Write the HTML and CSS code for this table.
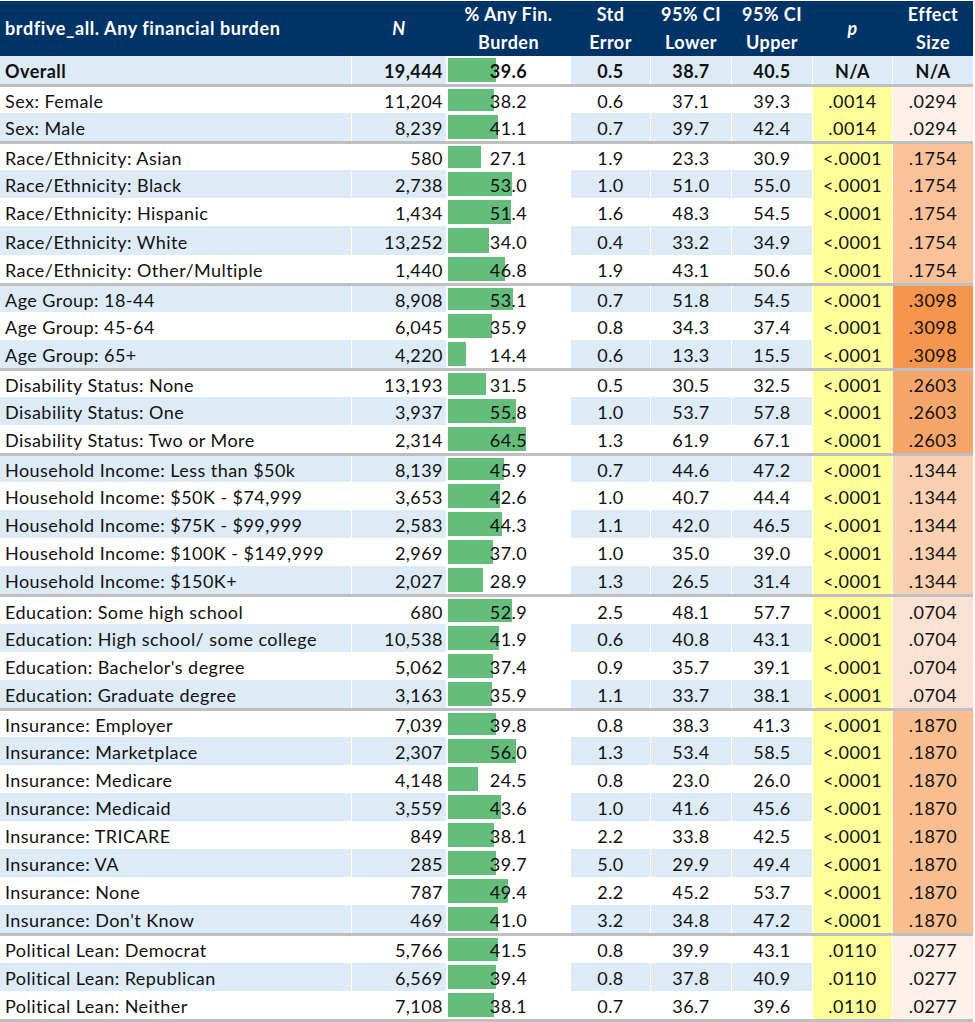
FILE: index.html
```html
<!DOCTYPE html>
<html>
<head>
<meta charset="utf-8">
<link rel="stylesheet" href="styles.css">
</head>
<body>
<div class="table">
  <div class="head">
    <div class="hc hl">brdfive_all. Any financial burden</div>
    <div class="hc"><i>N</i></div>
    <div class="hc">% Any Fin.<br>Burden</div>
    <div class="hc">Std<br>Error</div>
    <div class="hc">95% CI<br>Lower</div>
    <div class="hc">95% CI<br>Upper</div>
    <div class="hc"><i>p</i></div>
    <div class="hc">Effect<br>Size</div>
  </div>
  <div class="body">
    <div class="row overall"><div class="c lab">Overall</div><div class="c n">19,444</div><div class="c bar"><span class="fill" style="width:48.1px"></span><span class="v">39.6</span></div><div class="c">0.5</div><div class="c">38.7</div><div class="c">40.5</div><div class="c p">N/A</div><div class="c e">N/A</div></div>

    <div class="row gs"><div class="c lab">Sex: Female</div><div class="c n">11,204</div><div class="c bar"><span class="fill" style="width:46.4px"></span><span class="v">38.2</span></div><div class="c">0.6</div><div class="c">37.1</div><div class="c">39.3</div><div class="c p">.0014</div><div class="c e" style="background:#FCF0E9">.0294</div></div>
    <div class="row"><div class="c lab">Sex: Male</div><div class="c n">8,239</div><div class="c bar"><span class="fill" style="width:49.9px"></span><span class="v">41.1</span></div><div class="c">0.7</div><div class="c">39.7</div><div class="c">42.4</div><div class="c p">.0014</div><div class="c e" style="background:#FCF0E9">.0294</div></div>

    <div class="row gs"><div class="c lab">Race/Ethnicity: Asian</div><div class="c n">580</div><div class="c bar"><span class="fill" style="width:32.9px"></span><span class="v">27.1</span></div><div class="c">1.9</div><div class="c">23.3</div><div class="c">30.9</div><div class="c p">&lt;.0001</div><div class="c e" style="background:#F9C299">.1754</div></div>
    <div class="row"><div class="c lab">Race/Ethnicity: Black</div><div class="c n">2,738</div><div class="c bar"><span class="fill" style="width:64.4px"></span><span class="v">53.0</span></div><div class="c">1.0</div><div class="c">51.0</div><div class="c">55.0</div><div class="c p">&lt;.0001</div><div class="c e" style="background:#F9C299">.1754</div></div>
    <div class="row"><div class="c lab">Race/Ethnicity: Hispanic</div><div class="c n">1,434</div><div class="c bar"><span class="fill" style="width:62.5px"></span><span class="v">51.4</span></div><div class="c">1.6</div><div class="c">48.3</div><div class="c">54.5</div><div class="c p">&lt;.0001</div><div class="c e" style="background:#F9C299">.1754</div></div>
    <div class="row"><div class="c lab">Race/Ethnicity: White</div><div class="c n">13,252</div><div class="c bar"><span class="fill" style="width:41.3px"></span><span class="v">34.0</span></div><div class="c">0.4</div><div class="c">33.2</div><div class="c">34.9</div><div class="c p">&lt;.0001</div><div class="c e" style="background:#F9C299">.1754</div></div>
    <div class="row"><div class="c lab">Race/Ethnicity: Other/Multiple</div><div class="c n">1,440</div><div class="c bar"><span class="fill" style="width:56.9px"></span><span class="v">46.8</span></div><div class="c">1.9</div><div class="c">43.1</div><div class="c">50.6</div><div class="c p">&lt;.0001</div><div class="c e" style="background:#F9C299">.1754</div></div>

    <div class="row gs"><div class="c lab">Age Group: 18-44</div><div class="c n">8,908</div><div class="c bar"><span class="fill" style="width:64.5px"></span><span class="v">53.1</span></div><div class="c">0.7</div><div class="c">51.8</div><div class="c">54.5</div><div class="c p">&lt;.0001</div><div class="c e" style="background:#F5964C">.3098</div></div>
    <div class="row"><div class="c lab">Age Group: 45-64</div><div class="c n">6,045</div><div class="c bar"><span class="fill" style="width:43.6px"></span><span class="v">35.9</span></div><div class="c">0.8</div><div class="c">34.3</div><div class="c">37.4</div><div class="c p">&lt;.0001</div><div class="c e" style="background:#F5964C">.3098</div></div>
    <div class="row"><div class="c lab">Age Group: 65+</div><div class="c n">4,220</div><div class="c bar"><span class="fill" style="width:17.5px"></span><span class="v">14.4</span></div><div class="c">0.6</div><div class="c">13.3</div><div class="c">15.5</div><div class="c p">&lt;.0001</div><div class="c e" style="background:#F5964C">.3098</div></div>

    <div class="row gs"><div class="c lab">Disability Status: None</div><div class="c n">13,193</div><div class="c bar"><span class="fill" style="width:38.3px"></span><span class="v">31.5</span></div><div class="c">0.5</div><div class="c">30.5</div><div class="c">32.5</div><div class="c p">&lt;.0001</div><div class="c e" style="background:#F6A66B">.2603</div></div>
    <div class="row"><div class="c lab">Disability Status: One</div><div class="c n">3,937</div><div class="c bar"><span class="fill" style="width:67.8px"></span><span class="v">55.8</span></div><div class="c">1.0</div><div class="c">53.7</div><div class="c">57.8</div><div class="c p">&lt;.0001</div><div class="c e" style="background:#F6A66B">.2603</div></div>
    <div class="row"><div class="c lab">Disability Status: Two or More</div><div class="c n">2,314</div><div class="c bar"><span class="fill" style="width:78.4px"></span><span class="v">64.5</span></div><div class="c">1.3</div><div class="c">61.9</div><div class="c">67.1</div><div class="c p">&lt;.0001</div><div class="c e" style="background:#F6A66B">.2603</div></div>

    <div class="row gs"><div class="c lab">Household Income: Less than $50k</div><div class="c n">8,139</div><div class="c bar"><span class="fill" style="width:55.8px"></span><span class="v">45.9</span></div><div class="c">0.7</div><div class="c">44.6</div><div class="c">47.2</div><div class="c p">&lt;.0001</div><div class="c e" style="background:#FAD0B0">.1344</div></div>
    <div class="row"><div class="c lab">Household Income: $50K - $74,999</div><div class="c n">3,653</div><div class="c bar"><span class="fill" style="width:51.8px"></span><span class="v">42.6</span></div><div class="c">1.0</div><div class="c">40.7</div><div class="c">44.4</div><div class="c p">&lt;.0001</div><div class="c e" style="background:#FAD0B0">.1344</div></div>
    <div class="row"><div class="c lab">Household Income: $75K - $99,999</div><div class="c n">2,583</div><div class="c bar"><span class="fill" style="width:53.8px"></span><span class="v">44.3</span></div><div class="c">1.1</div><div class="c">42.0</div><div class="c">46.5</div><div class="c p">&lt;.0001</div><div class="c e" style="background:#FAD0B0">.1344</div></div>
    <div class="row"><div class="c lab">Household Income: $100K - $149,999</div><div class="c n">2,969</div><div class="c bar"><span class="fill" style="width:45.0px"></span><span class="v">37.0</span></div><div class="c">1.0</div><div class="c">35.0</div><div class="c">39.0</div><div class="c p">&lt;.0001</div><div class="c e" style="background:#FAD0B0">.1344</div></div>
    <div class="row"><div class="c lab">Household Income: $150K+</div><div class="c n">2,027</div><div class="c bar"><span class="fill" style="width:35.1px"></span><span class="v">28.9</span></div><div class="c">1.3</div><div class="c">26.5</div><div class="c">31.4</div><div class="c p">&lt;.0001</div><div class="c e" style="background:#FAD0B0">.1344</div></div>

    <div class="row gs"><div class="c lab">Education: Some high school</div><div class="c n">680</div><div class="c bar"><span class="fill" style="width:64.3px"></span><span class="v">52.9</span></div><div class="c">2.5</div><div class="c">48.1</div><div class="c">57.7</div><div class="c p">&lt;.0001</div><div class="c e" style="background:#FBE3D4">.0704</div></div>
    <div class="row"><div class="c lab">Education: High school/ some college</div><div class="c n">10,538</div><div class="c bar"><span class="fill" style="width:50.9px"></span><span class="v">41.9</span></div><div class="c">0.6</div><div class="c">40.8</div><div class="c">43.1</div><div class="c p">&lt;.0001</div><div class="c e" style="background:#FBE3D4">.0704</div></div>
    <div class="row"><div class="c lab">Education: Bachelor's degree</div><div class="c n">5,062</div><div class="c bar"><span class="fill" style="width:45.4px"></span><span class="v">37.4</span></div><div class="c">0.9</div><div class="c">35.7</div><div class="c">39.1</div><div class="c p">&lt;.0001</div><div class="c e" style="background:#FBE3D4">.0704</div></div>
    <div class="row"><div class="c lab">Education: Graduate degree</div><div class="c n">3,163</div><div class="c bar"><span class="fill" style="width:43.6px"></span><span class="v">35.9</span></div><div class="c">1.1</div><div class="c">33.7</div><div class="c">38.1</div><div class="c p">&lt;.0001</div><div class="c e" style="background:#FBE3D4">.0704</div></div>

    <div class="row gs"><div class="c lab">Insurance: Employer</div><div class="c n">7,039</div><div class="c bar"><span class="fill" style="width:48.4px"></span><span class="v">39.8</span></div><div class="c">0.8</div><div class="c">38.3</div><div class="c">41.3</div><div class="c p">&lt;.0001</div><div class="c e" style="background:#F8BE90">.1870</div></div>
    <div class="row"><div class="c lab">Insurance: Marketplace</div><div class="c n">2,307</div><div class="c bar"><span class="fill" style="width:68.0px"></span><span class="v">56.0</span></div><div class="c">1.3</div><div class="c">53.4</div><div class="c">58.5</div><div class="c p">&lt;.0001</div><div class="c e" style="background:#F8BE90">.1870</div></div>
    <div class="row"><div class="c lab">Insurance: Medicare</div><div class="c n">4,148</div><div class="c bar"><span class="fill" style="width:29.8px"></span><span class="v">24.5</span></div><div class="c">0.8</div><div class="c">23.0</div><div class="c">26.0</div><div class="c p">&lt;.0001</div><div class="c e" style="background:#F8BE90">.1870</div></div>
    <div class="row"><div class="c lab">Insurance: Medicaid</div><div class="c n">3,559</div><div class="c bar"><span class="fill" style="width:53.0px"></span><span class="v">43.6</span></div><div class="c">1.0</div><div class="c">41.6</div><div class="c">45.6</div><div class="c p">&lt;.0001</div><div class="c e" style="background:#F8BE90">.1870</div></div>
    <div class="row"><div class="c lab">Insurance: TRICARE</div><div class="c n">849</div><div class="c bar"><span class="fill" style="width:46.3px"></span><span class="v">38.1</span></div><div class="c">2.2</div><div class="c">33.8</div><div class="c">42.5</div><div class="c p">&lt;.0001</div><div class="c e" style="background:#F8BE90">.1870</div></div>
    <div class="row"><div class="c lab">Insurance: VA</div><div class="c n">285</div><div class="c bar"><span class="fill" style="width:48.2px"></span><span class="v">39.7</span></div><div class="c">5.0</div><div class="c">29.9</div><div class="c">49.4</div><div class="c p">&lt;.0001</div><div class="c e" style="background:#F8BE90">.1870</div></div>
    <div class="row"><div class="c lab">Insurance: None</div><div class="c n">787</div><div class="c bar"><span class="fill" style="width:60.0px"></span><span class="v">49.4</span></div><div class="c">2.2</div><div class="c">45.2</div><div class="c">53.7</div><div class="c p">&lt;.0001</div><div class="c e" style="background:#F8BE90">.1870</div></div>
    <div class="row"><div class="c lab">Insurance: Don't Know</div><div class="c n">469</div><div class="c bar"><span class="fill" style="width:49.8px"></span><span class="v">41.0</span></div><div class="c">3.2</div><div class="c">34.8</div><div class="c">47.2</div><div class="c p">&lt;.0001</div><div class="c e" style="background:#F8BE90">.1870</div></div>

    <div class="row gs"><div class="c lab">Political Lean: Democrat</div><div class="c n">5,766</div><div class="c bar"><span class="fill" style="width:50.4px"></span><span class="v">41.5</span></div><div class="c">0.8</div><div class="c">39.9</div><div class="c">43.1</div><div class="c p">.0110</div><div class="c e" style="background:#FCF0E9">.0277</div></div>
    <div class="row"><div class="c lab">Political Lean: Republican</div><div class="c n">6,569</div><div class="c bar"><span class="fill" style="width:47.9px"></span><span class="v">39.4</span></div><div class="c">0.8</div><div class="c">37.8</div><div class="c">40.9</div><div class="c p">.0110</div><div class="c e" style="background:#FCF0E9">.0277</div></div>
    <div class="row last"><div class="c lab">Political Lean: Neither</div><div class="c n">7,108</div><div class="c bar"><span class="fill" style="width:46.3px"></span><span class="v">38.1</span></div><div class="c">0.7</div><div class="c">36.7</div><div class="c">39.6</div><div class="c p">.0110</div><div class="c e" style="background:#FCF0E9">.0277</div></div>
  </div>
</div>
</body>
</html>
```

FILE: styles.css
```css
* { box-sizing: border-box; }
html, body { margin: 0; padding: 0; background: #ffffff; }
body {
  padding-top: 1px;
  font-family: "Lato", "Open Sans", sans-serif;
  font-size: 18px;
  letter-spacing: 0.45px;
  color: #111111;
}
.table { width: 973px; }
.head, .row {
  display: grid;
  grid-template-columns: 351px 94px 123px 79px 80px 80px 79px 80px;
  column-gap: 1px;
}
.head {
  background: #003366;
  height: 55px;
  color: #ffffff;
  font-weight: 700;
}
.hc {
  display: flex;
  align-items: center;
  justify-content: center;
  text-align: center;
  line-height: 27.5px;
}
.hc.hl { justify-content: flex-start; padding-left: 5px; letter-spacing: 0.6px; }
.row {
  height: 28.08px;
  background: #ffffff;
}
.row.gs { height: 29.08px; border-top: 3px solid #bfbfbf; }
.row.last { border-bottom: 3px solid #bfbfbf; height: 31px; }
.c {
  display: flex;
  align-items: center;
  justify-content: center;
  white-space: nowrap;
  padding-top: 2px;
}
.c.lab { justify-content: flex-start; padding-left: 5px; }
.c.n { justify-content: flex-end; padding-right: 3px; }
.body .row:nth-child(odd) .c { background: #ddebf7; }
.body .row .c.bar { background: #ffffff; position: relative; }
.body .row .c.p { background: #ffff99; }
.overall { font-weight: 700; }
.body .row.overall .c.p, .body .row.overall .c.e { background: #ddebf7; }
.fill {
  position: absolute;
  left: 1px;
  top: 2px;
  bottom: 2px;
  background: #63be7b;
}
.v { position: relative; }
```
